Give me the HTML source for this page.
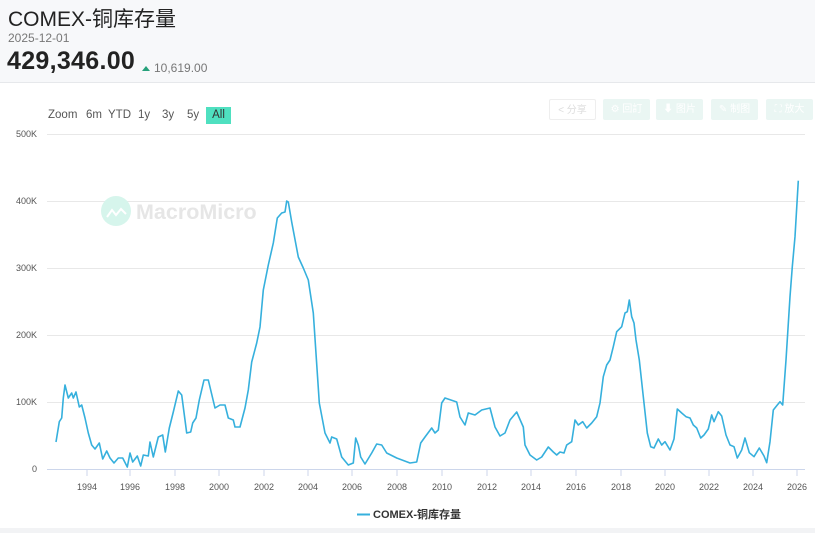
<!DOCTYPE html>
<html><head><meta charset="utf-8"><style>
*{margin:0;padding:0;box-sizing:border-box}
body{width:815px;height:533px;overflow:hidden;background:#fff;font-family:"Liberation Sans","Noto Sans CJK SC",sans-serif;position:relative}
.hdr{position:absolute;left:0;top:0;width:815px;height:83px;background:#f7f8fa;border-bottom:1px solid #e6e8eb}
.t{position:absolute;left:8px;top:3px;font-size:21px;color:#222}
.d{position:absolute;left:8px;top:31px;font-size:12px;color:#777}
.n{position:absolute;left:7px;top:47px;font-size:25px;font-weight:bold;color:#222;letter-spacing:0.3px}
.c{position:absolute;left:142px;top:61px;font-size:12px;color:#777}
.c b{display:inline-block;width:0;height:0;border-left:4px solid transparent;border-right:4px solid transparent;border-bottom:5px solid #26a17b;margin-right:4px;vertical-align:1px}
.z{position:absolute;top:109px;font-size:11.5px;color:#555}
.all{position:absolute;left:206px;top:107px;width:25px;height:17px;background:#4fe0c0;color:#333;font-size:11.5px;text-align:center;line-height:17px}
.btn{position:absolute;top:99px;height:21px;width:47px;background:#eaf6f3;border-radius:2px;color:#fff;font-size:10px;text-align:center;line-height:21px}
.y{position:absolute;font-size:9px;color:#555;text-align:right;width:30px;left:7px}
.x{position:absolute;top:482px;font-size:9px;color:#555;width:30px;text-align:center}
.foot{position:absolute;left:0;top:528px;width:815px;height:5px;background:#f2f3f5}
</style></head><body>
<div class="hdr">
<div class="t">COMEX-铜库存量</div>
<div class="d">2025-12-01</div>
<div class="n">429,346.00</div>
<div class="c"><b></b>10,619.00</div>
</div>
<div class="z" style="left:48px">Zoom</div>
<div class="z" style="left:86px">6m</div>
<div class="z" style="left:108px">YTD</div>
<div class="z" style="left:138px">1y</div>
<div class="z" style="left:162px">3y</div>
<div class="z" style="left:187px">5y</div>
<div class="all">All</div>
<div class="btn" style="left:549px;background:#fff;border:1px solid #eee;color:#ddd">&lt; 分享</div>
<div class="btn" style="left:603px">⚙ 回訂</div>
<div class="btn" style="left:656px">⬇ 图片</div>
<div class="btn" style="left:711px">✎ 制图</div>
<div class="btn" style="left:766px">⛶ 放大</div>
<div class="y" style="top:129px">500K</div>
<div class="y" style="top:196px">400K</div>
<div class="y" style="top:263px">300K</div>
<div class="y" style="top:330px">200K</div>
<div class="y" style="top:397px">100K</div>
<div class="y" style="top:464px">0</div>
<div class="x" style="left:72px">1994</div><div class="x" style="left:115px">1996</div><div class="x" style="left:160px">1998</div><div class="x" style="left:204px">2000</div><div class="x" style="left:249px">2002</div><div class="x" style="left:293px">2004</div><div class="x" style="left:337px">2006</div><div class="x" style="left:382px">2008</div><div class="x" style="left:427px">2010</div><div class="x" style="left:472px">2012</div><div class="x" style="left:516px">2014</div><div class="x" style="left:561px">2016</div><div class="x" style="left:606px">2018</div><div class="x" style="left:650px">2020</div><div class="x" style="left:694px">2022</div><div class="x" style="left:738px">2024</div><div class="x" style="left:782px">2026</div>
<svg width="815" height="533" style="position:absolute;left:0;top:0">
<g stroke="#e8e8e8" stroke-width="1">
<line x1="47" x2="805" y1="134.5" y2="134.5"/><line x1="47" x2="805" y1="201.5" y2="201.5"/><line x1="47" x2="805" y1="268.5" y2="268.5"/><line x1="47" x2="805" y1="335.5" y2="335.5"/><line x1="47" x2="805" y1="402.5" y2="402.5"/>
</g>
<line x1="47" x2="805" y1="469.5" y2="469.5" stroke="#ccd6eb"/>
<g stroke="#ccd6eb"><path d="M87 470v6M130 470v6M175 470v6M219 470v6M264 470v6M308 470v6M352 470v6M397 470v6M442 470v6M487 470v6M531 470v6M576 470v6M621 470v6M665 470v6M709 470v6M753 470v6M797 470v6"/></g>
<circle cx="116" cy="211" r="15" fill="#d6f5ec"/>
<path d="M107 217l5-7 4 5 5-6 5 5" stroke="#fff" stroke-width="2" fill="none"/>
<text x="136" y="219" font-size="21.5" font-weight="bold" fill="#e6e6e6" font-family="Liberation Sans">MacroMicro</text>
<polyline fill="none" stroke="#36b0dd" stroke-width="1.6" stroke-linejoin="round" points="56,442 59.3,421.7 61.7,418 63.3,398 65,385 68.3,398 71.7,393 73.3,398 76,392 79.3,407 81.7,405 85,418 88.3,433 91.7,445 95,449 99.3,443 102.7,459 106.7,451 110,458 114,463 118.3,458 122.7,458 127.3,467 130,453 132.7,462 137.3,456 140.7,466 143.3,455 148.3,456 150,442 153.3,457 158.3,437 162.7,435 165.3,452 169.3,428 173.3,412 178.3,391 181.7,395 186.7,433 190.7,432 192.7,423 196,418 199.3,400 204,380 208.3,380 215,408 220,405 225,405 228.3,418 233.3,420 235,427 240,427 245,408 248.3,390 251.7,362 256.7,343 260,327 263.3,290 268.3,265 273.3,243 277.3,218 281.7,213 285,212 286.7,201 288.3,202 291.7,222 298.3,257 303.3,268 308.3,280 313.3,313 319.3,403 325,433 330,443 331.7,437 336.7,439 341.7,457 348.3,465 353.3,463 355.7,438 358.3,445 360.7,457 365,464 371.7,453 376.7,444 381.7,445 386.7,453 396.7,458 410,463 416.7,462 420.7,443 425,437 431.7,428 435,433 438.3,430 441.7,403 445,398 456.7,402 460,417 465,425 468.3,413 475,415 481.7,410 490,408 495,427 500,436 505,433 510,420 516.7,412 523.3,427 525,445 530,455 536.7,460 541.7,457 548.3,447 553.3,452 556.7,455 560,452 564,453 566.7,445 571.7,441.7 575,420 578.3,425 582.7,421.7 586.7,428 591.7,423 596.7,416.7 600,403 603.3,376.7 606.7,365 610,360 613.3,346.7 616.7,331.7 621.7,326.7 625,313 627.3,311.7 629.3,300 631.7,316.7 634,323 636,340 639.3,360 643.3,396.7 647.3,433 650.7,446.7 654,448 658.3,439 661.7,445 665,441.7 670,450 674,439 677.3,409 681.7,413 686,416.7 690,418 693.3,425 696.7,428 700.7,438 704,435 708.3,429 711.7,415 714,421.7 718.3,411.7 721.7,416 726,435 730,445 734,446.7 737.3,458 741.7,450 745,438 749.3,452.7 754,456.7 759.3,448 764,456 766.7,462.7 770,441.7 773.3,410 777.3,405 780,401.7 782.7,405 786,360 790,296.7 792.3,266.7 795,236.7 798.3,180.7"/>
<line x1="357" x2="370" y1="514.5" y2="514.5" stroke="#36b0dd" stroke-width="2"/>
<text x="373" y="518" font-size="11" font-weight="bold" fill="#333" font-family="Liberation Sans,Noto Sans CJK SC,sans-serif">COMEX-铜库存量</text>
</svg>
<div class="foot"></div>
</body></html>
